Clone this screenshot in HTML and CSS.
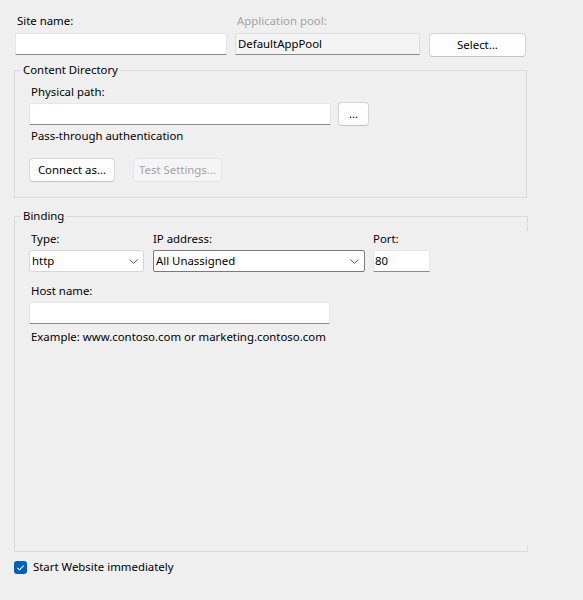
FILE: index.html
```html
<!DOCTYPE html>
<html>
<head>
<meta charset="utf-8">
<link rel="stylesheet" href="styles.css">
</head>
<body>
<div class="dialog">
  <div class="top-row">
    <div class="field site">
      <div class="label">Site name:</div>
      <div class="input"></div>
    </div>
    <div class="field pool">
      <div class="label disabled">Application pool:</div>
      <div class="input readonly">DefaultAppPool</div>
    </div>
    <button class="btn select-btn">Select...</button>
  </div>

  <div class="group content-dir">
    <span class="group-title">Content Directory</span>
    <div class="label">Physical path:</div>
    <div class="path-row">
      <div class="input path"></div>
      <button class="btn dots">...</button>
    </div>
    <div class="text pass">Pass-through authentication</div>
    <div class="btn-row">
      <button class="btn connect">Connect as...</button>
      <button class="btn test" disabled>Test Settings...</button>
    </div>
  </div>

  <div class="group binding">
    <span class="group-title">Binding</span>
    <div class="bind-row">
      <div class="field type">
        <div class="label">Type:</div>
        <div class="select">http<svg class="chev" width="9" height="5" viewBox="0 0 9 5"><path d="M0.5 0.5 L4.5 4.5 L8.5 0.5" fill="none" stroke="#5a5a5a" stroke-width="1"/></svg></div>
      </div>
      <div class="field ip">
        <div class="label">IP address:</div>
        <div class="select focused">All Unassigned<svg class="chev" width="9" height="5" viewBox="0 0 9 5"><path d="M0.5 0.5 L4.5 4.5 L8.5 0.5" fill="none" stroke="#5a5a5a" stroke-width="1"/></svg></div>
      </div>
      <div class="field port">
        <div class="label">Port:</div>
        <div class="input">80</div>
      </div>
    </div>
    <div class="label host-label">Host name:</div>
    <div class="input host"></div>
    <div class="text example">Example: www.contoso.com or marketing.contoso.com</div>
  </div>

  <div class="check-row">
    <span class="checkbox"><svg width="13" height="13" viewBox="0 0 13 13"><path d="M3.5 6.8 L5.6 8.8 L9.6 4.6" fill="none" stroke="#fff" stroke-width="1.1"/></svg></span>
    <span class="check-label">Start Website immediately</span>
  </div>
</div>
</body>
</html>
```

FILE: styles.css
```css
* { box-sizing: border-box; }
html, body {
  margin: 0;
  padding: 0;
  background: #efefef;
}
body {
  font-family: "Noto Sans", "Open Sans", sans-serif;
  font-size: 11.4px;
  line-height: 16px;
  color: #000;
  width: 583px;
  height: 600px;
  overflow: hidden;
}
.dialog {
  padding: 13px 0 0 14px;
}
.label {
  height: 16px;
  padding-left: 2px;
  white-space: nowrap;
}
.label.disabled { color: #a3a3a3; }
.input {
  height: 22px;
  background: #fff;
  border: 1px solid #e6e6e6;
  border-bottom: 1px solid #8a8a8a;
  border-radius: 2px 2px 0 0;
  padding: 2px 0 0 2px;
  white-space: nowrap;
}
.input.readonly {
  background: #f4f4f4;
  border-color: #dedede;
  border-bottom-color: #8a8a8a;
}
.field .input { margin-top: 4px; }

.btn {
  height: 24px;
  font-family: inherit;
  font-size: 11.4px;
  color: #000;
  background: #fdfdfd;
  border: 1px solid #d4d4d4;
  border-bottom-color: #c2c2c2;
  border-radius: 4px;
  padding: 0 7px;
  margin: 0;
  line-height: 20px;
}
.btn:disabled {
  color: #a3a3a3;
  background: #f5f5f5;
  border-color: #e3e3e3;
}

.top-row {
  display: flex;
  align-items: flex-start;
}
.site { margin-left: 1px; width: 212px; }
.pool { margin-left: 8px; width: 185px; }
.top-row .select-btn { margin-left: 9px; margin-top: 20px; width: 97px; }

.group {
  position: relative;
  width: 513px;
  border: 1px solid #dadada;
  padding-left: 14px;
}
.group-title {
  position: absolute;
  top: -9px;
  left: 6px;
  padding: 0 2px;
  background: #efefef;
  line-height: 16px;
}
.content-dir {
  margin-top: 13px;
  padding-top: 13px;
  padding-bottom: 15px;
}
.path-row {
  display: flex;
  align-items: center;
  margin-top: 2px;
}
.path { width: 302px; }
.path-row .dots {
  margin-left: 7px;
  width: 31px;
  padding: 0;
}
.text { padding-left: 2px; white-space: nowrap; }
.pass { margin-top: 2px; }
.btn-row {
  display: flex;
  margin-top: 14px;
}
.btn-row .connect { width: 86px; padding: 0; }
.btn-row .test { width: 89px; margin-left: 18px; padding: 0; }

.binding {
  margin-top: 18px;
  height: 336px;
  padding-top: 14px;
  border-right: none;
}
.binding::before,
.binding::after {
  content: "";
  position: absolute;
  right: -1px;
  width: 1px;
  background: #dadada;
}
.binding::before { top: -1px; height: 15px; }
.binding::after { bottom: -1px; height: 6px; }

.bind-row {
  display: flex;
  align-items: flex-start;
}
.bind-row .label { padding-left: 2px; }
.type { width: 115px; }
.ip { width: 212px; margin-left: 9px; }
.ip .label { padding-left: 0; }
.port { width: 57px; margin-left: 8px; }
.port .label { padding-left: 0; }
.port .input { padding-left: 1px; margin-top: 3px; }
.select {
  position: relative;
  height: 22px;
  margin-top: 3px;
  background: #fff;
  border: 1px solid #d6d6d6;
  border-radius: 3px;
  padding: 2px 0 0 2px;
  white-space: nowrap;
}
.select.focused { border-color: #7a7a7a; border-radius: 2px; }
.chev {
  position: absolute;
  right: 5px;
  top: 8px;
}
.host-label { margin-top: 11px; }
.host { width: 301px; margin-top: 3px; }
.example { margin-top: 5px; }

.check-row {
  display: flex;
  align-items: center;
  margin-top: 7px;
}
.checkbox {
  width: 13px;
  height: 13px;
  background: #005fb8;
  border-radius: 3px;
  display: block;
}
.checkbox svg { display: block; }
.check-label { margin-left: 6px; line-height: 16px; }
```
